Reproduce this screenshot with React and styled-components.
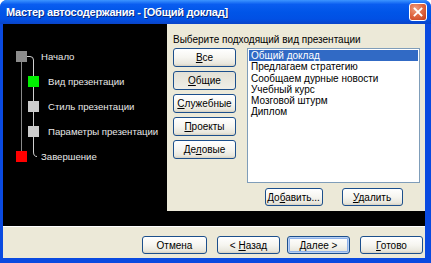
import React from 'react';
import styled, {createGlobalStyle, css} from "styled-components";

const Global = createGlobalStyle`
    html, body {
        margin: 0;
        padding: 0;
        background: #ffffff;
    }
    body {
        font-family: "Liberation Sans", Arial, sans-serif;
        font-size: 10px;
    }
`;

const Window = styled.div`
    width: 431px;
    height: 263px;
    display: flex;
    flex-direction: column;
    background: #0a4ae0;
    border-radius: 7px 7px 0 0;
    overflow: hidden;
`;

const TitleBar = styled.div`
    height: 24px;
    flex: none;
    display: flex;
    align-items: center;
    padding: 0 4px 0 6px;
    background: linear-gradient(180deg, #3d95ff 0%, #0a5df0 18%, #0055e8 50%, #0150e4 80%, #0a44c8 100%);
`;

const Title = styled.div`
    flex: 1;
    color: #ffffff;
    font-weight: bold;
    font-size: 11px;
    letter-spacing: -0.25px;
    text-shadow: 1px 1px 0 #0a2a80;
`;

const CloseButton = styled.div`
    width: 18px;
    height: 18px;
    border: 1px solid #ffffff;
    border-radius: 3px;
    box-sizing: border-box;
    background: radial-gradient(circle at 35% 30%, #f0a080 0%, #e06a45 45%, #c43a18 100%);
    display: flex;
    align-items: center;
    justify-content: center;
`;

const Frame = styled.div`
    flex: 1;
    display: flex;
    flex-direction: column;
    margin: 0 6px 5px 3px;
`;

const Body = styled.div`
    height: 202px;
    display: flex;
    align-items: flex-start;
    background: #000000;
`;

const StepsPanel = styled.div`
    width: 164px;
    flex: none;
    padding-top: 20px;
`;

const Tree = styled.div`
    position: relative;
`;

const Connectors = styled.svg`
    position: absolute;
    left: 0;
    top: 0;
    pointer-events: none;
`;

const StepRow = styled.div`
    position: relative;
    height: 25px;
    display: flex;
    align-items: center;
    padding-left: ${({level}) => level ? 25 : 13}px;
`;

const Square = styled.div`
    width: 11px;
    height: 11px;
    flex: none;
    background: ${({color}) => color};
`;

const StepLabel = styled.span`
    color: #e8e8e8;
    font-size: 9.6px;
    margin-left: ${({level}) => level ? 9 : 14}px;
    white-space: nowrap;
`;

const ChoicePanel = styled.div`
    width: 258px;
    height: 187px;
    flex: none;
    box-sizing: border-box;
    background: #ece9d8;
    padding: 10px 4px 0 6px;
    display: flex;
    flex-direction: column;
`;

const Caption = styled.div`
    color: #000000;
    height: 14px;
    line-height: 11px;
    white-space: nowrap;
`;

const ChoiceRow = styled.div`
    display: flex;
    gap: 11px;
`;

const CategoryColumn = styled.div`
    width: 63px;
    display: flex;
    flex-direction: column;
    gap: 4px;
`;

const XpButton = styled.button`
    height: ${({h}) => h || 19}px;
    width: ${({w}) => w ? `${w}px` : '100%'};
    padding: 0;
    box-sizing: border-box;
    font-family: "Liberation Sans", Arial, sans-serif;
    font-size: 10px;
    color: #000000;
    border: 1px solid #1c4f8c;
    border-radius: 3px;
    background: linear-gradient(180deg, #ffffff 0%, #f6f5f0 50%, #e8e6dc 88%, #d6d0c0 100%);
    display: flex;
    align-items: center;
    justify-content: center;
    ${({pressed}) => pressed && css`
        background: linear-gradient(180deg, #e2e0d6 0%, #e8e6dc 40%, #efeee7 100%);
    `}
    ${({focused}) => focused && css`
        box-shadow: inset 0 0 0 1px #b9d1f5, inset 0 0 0 2px #8fb2ea;
    `}
    u {
        text-decoration: underline;
        text-underline-offset: 1px;
    }
`;

const ListArea = styled.div`
    display: flex;
    flex-direction: column;
    align-items: center;
    gap: 5px;
`;

const ListBox = styled.div`
    width: 173px;
    height: 135px;
    box-sizing: border-box;
    background: #ffffff;
    border: 1px solid #7f9db9;
    padding: 1px;
`;

const ListItem = styled.div`
    height: 11.3px;
    line-height: 11.3px;
    padding-left: 2px;
    white-space: nowrap;
    color: ${({selected}) => selected ? '#ffffff' : '#000000'};
    background: ${({selected}) => selected ? '#316ac5' : 'transparent'};
`;

const ListButtons = styled.div`
    display: flex;
    gap: 19px;
`;

const Footer = styled.div`
    flex: 1;
    background: #ece9d8;
    border-top: 1px solid #ffffff;
    display: flex;
    justify-content: flex-end;
    align-items: flex-start;
    padding: 9px 2px 0 0;
`;

const FooterGroup = styled.div`
    display: flex;
    gap: ${({gap}) => gap}px;
    margin-left: ${({space}) => space || 0}px;
`;

const steps = [
    {label: "Начало", level: 0, color: "#8c8c8c"},
    {label: "Вид презентации", level: 1, color: "#00f000"},
    {label: "Стиль презентации", level: 1, color: "#cccccc"},
    {label: "Параметры презентации", level: 1, color: "#cccccc"},
    {label: "Завершение", level: 0, color: "#ff0000"},
];

const templates = [
    "Общий доклад",
    "Предлагаем стратегию",
    "Сообщаем дурные новости",
    "Учебный курс",
    "Мозговой штурм",
    "Диплом",
];

function Key({before, k, after}) {
    return <span>{before}<u>{k}</u>{after}</span>;
}

function App() {
    return (
        <>
            <Global/>
            <Window>
                <TitleBar>
                    <Title>Мастер автосодержания - [Общий доклад]</Title>
                    <CloseButton>
                        <svg width="10" height="10" viewBox="0 0 10 10">
                            <path d="M1.5 1.5 L8.5 8.5 M8.5 1.5 L1.5 8.5" stroke="#ffffff" strokeWidth="1.8" strokeLinecap="square"/>
                        </svg>
                    </CloseButton>
                </TitleBar>
                <Frame>
                    <Body>
                        <StepsPanel>
                            <Tree>
                                <Connectors width="60" height="125">
                                    <path d="M18.5 18 V107" stroke="#8a8a8a" strokeWidth="1" fill="none"/>
                                    <path d="M24 12.5 H27 Q30.5 12.5 30.5 16 V108 Q30.5 112.5 34 112.5" stroke="#d0d0d0" strokeWidth="1" fill="none"/>
                                </Connectors>
                                {
                                    steps.map((s) => (
                                        <StepRow key={s.label} level={s.level}>
                                            <Square color={s.color}/>
                                            <StepLabel level={s.level}>{s.label}</StepLabel>
                                        </StepRow>
                                    ))
                                }
                            </Tree>
                        </StepsPanel>
                        <ChoicePanel>
                            <Caption>Выберите подходящий вид презентации</Caption>
                            <ChoiceRow>
                                <CategoryColumn>
                                    <XpButton><Key k="В" after="се"/></XpButton>
                                    <XpButton pressed><Key k="О" after="бщие"/></XpButton>
                                    <XpButton><Key k="С" after="лужебные"/></XpButton>
                                    <XpButton><Key k="П" after="роекты"/></XpButton>
                                    <XpButton><Key before="Де" k="л" after="овые"/></XpButton>
                                </CategoryColumn>
                                <ListArea>
                                    <ListBox>
                                        {
                                            templates.map((t, i) => (
                                                <ListItem key={t} selected={i === 0}>{t}</ListItem>
                                            ))
                                        }
                                    </ListBox>
                                    <ListButtons>
                                        <XpButton w={58} h={18}><Key before="До" k="б" after="авить..."/></XpButton>
                                        <XpButton w={61} h={18}><Key k="У" after="далить"/></XpButton>
                                    </ListButtons>
                                </ListArea>
                            </ChoiceRow>
                        </ChoicePanel>
                    </Body>
                    <Footer>
                        <FooterGroup gap={0}>
                            <XpButton w={65} h={18}>Отмена</XpButton>
                        </FooterGroup>
                        <FooterGroup gap={7} space={10}>
                            <XpButton w={63} h={18}><Key before="< " k="Н" after="азад"/></XpButton>
                            <XpButton w={63} h={18} focused><Key k="Д" after="алее >"/></XpButton>
                        </FooterGroup>
                        <FooterGroup gap={0} space={10}>
                            <XpButton w={63} h={18}><Key k="Г" after="отово"/></XpButton>
                        </FooterGroup>
                    </Footer>
                </Frame>
            </Window>
        </>
    );
}

export default App;
